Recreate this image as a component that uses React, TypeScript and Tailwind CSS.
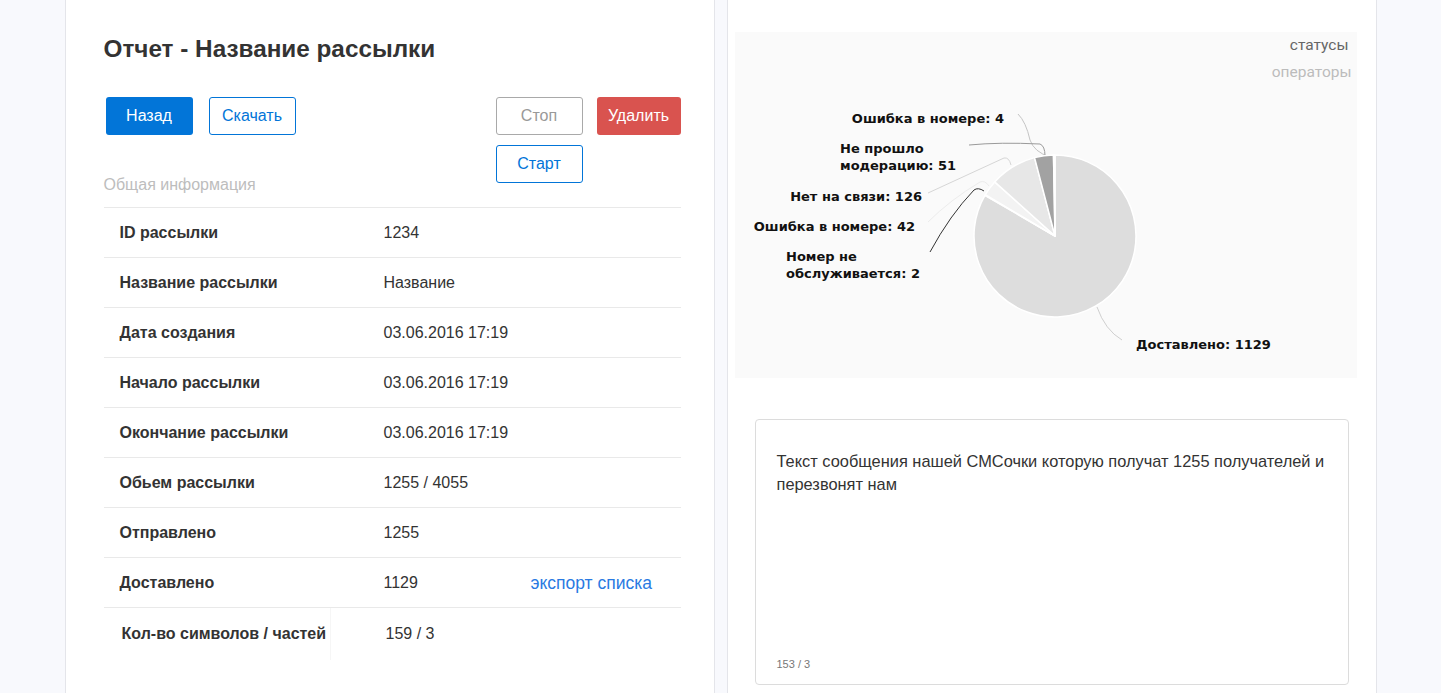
import React from 'react';

const rows = [
  { label: 'ID рассылки', value: '1234' },
  { label: 'Название рассылки', value: 'Название' },
  { label: 'Дата создания', value: '03.06.2016 17:19' },
  { label: 'Начало рассылки', value: '03.06.2016 17:19' },
  { label: 'Окончание рассылки', value: '03.06.2016 17:19' },
  { label: 'Обьем рассылки', value: '1255 / 4055' },
  { label: 'Отправлено', value: '1255' },
  { label: 'Доставлено', value: '1129', link: 'экспорт списка' },
];

const slices = [
  { value: 1129, color: '#dddddd' },
  { value: 2, color: '#4a4a4a' },
  { value: 42, color: '#f3f3f3' },
  { value: 126, color: '#e7e7e7' },
  { value: 51, color: '#a2a2a2' },
  { value: 4, color: '#c8c8c8' },
];

const CX = 1055;
const CY = 236;
const R = 81;

function point(angle: number) {
  const a = ((angle - 90) * Math.PI) / 180;
  return [CX + R * Math.cos(a), CY + R * Math.sin(a)];
}

function PieChart() {
  const total = slices.reduce((s, x) => s + x.value, 0);
  let start = 0;
  const paths = slices.map((s, i) => {
    const sweep = (s.value / total) * 360;
    const [x1, y1] = point(start);
    const [x2, y2] = point(start + sweep);
    const large = sweep > 180 ? 1 : 0;
    start += sweep;
    return (
      <path
        key={i}
        d={`M${CX},${CY} L${x1},${y1} A${R},${R} 0 ${large} 1 ${x2},${y2} Z`}
        fill={s.color}
        stroke="#ffffff"
        strokeWidth={1.5}
        strokeLinejoin="round"
      />
    );
  });

  const label = { fontFamily: '"DejaVu Sans", sans-serif', fontWeight: 700, fontSize: 13, fill: '#111' };

  return (
    <svg width={622} height={294} viewBox="735 84 622 294" className="block">
      {/* leader lines */}
      <path d="M1018,114 Q1026,122 1030,140 Q1034,152 1050,157" fill="none" stroke="#c4c4c4" strokeWidth={1} />
      <path d="M969,145 Q1000,142 1040,144 Q1045,146 1045,156" fill="none" stroke="#9a9a9a" strokeWidth={1} />
      <path d="M928,193 L1004,158 Q1009,157 1011,165" fill="none" stroke="#d6d6d6" strokeWidth={1} />
      <path d="M928,222 Q950,200 980,182 Q985,180 989,186" fill="none" stroke="#ececec" strokeWidth={1} />
      <path d="M930,252 Q950,215 974,190 Q978,187 984,191" fill="none" stroke="#333333" strokeWidth={1} />
      <path d="M1097,307 Q1105,330 1122,340" fill="none" stroke="#cfcfcf" strokeWidth={1} />
      {paths}
      <text x={1004} y={123} textAnchor="end" style={label}>Ошибка в номере: 4</text>
      <text x={840} y={153} style={label}>Не прошло</text>
      <text x={840} y={170} style={label}>модерацию: 51</text>
      <text x={922} y={201} textAnchor="end" style={label}>Нет на связи: 126</text>
      <text x={915} y={231} textAnchor="end" style={label}>Ошибка в номере: 42</text>
      <text x={786} y={261} style={label}>Номер не</text>
      <text x={786} y={278} style={label}>обслуживается: 2</text>
      <text x={1136} y={349} style={label}>Доставлено: 1129</text>
    </svg>
  );
}

export default function App() {
  return (
    <div className="min-h-screen bg-[#f8f9fd] font-['Liberation_Sans',Arial,sans-serif]">
      <div className="mx-auto flex w-[1312px] gap-[12px]">
        {/* Left panel: report */}
        <div className="h-[693px] w-[650px] border-x border-[#e4e5ea] bg-white pl-[38px] pr-[33px]">
          <h1 className="pt-[35px] text-[24.3px] font-bold leading-[28px] text-[#333]">Отчет - Название рассылки</h1>

          <div className="mt-[34px] flex h-[38px] items-start">
            <div className="flex gap-[16px] pl-[2px]">
              <button className="h-[38px] w-[87px] rounded-[3px] bg-[#0275d8] text-[16px] text-white">Назад</button>
              <button className="h-[38px] w-[87px] rounded-[3px] border border-[#0275d8] text-[16px] text-[#0275d8]">Скачать</button>
            </div>
            <div className="ml-auto flex gap-[14px]">
              <div className="flex flex-col gap-[10px]">
                <button className="h-[38px] w-[87px] rounded-[3px] border border-[#a9a9a9] text-[16px] text-[#999]">Стоп</button>
                <button className="h-[38px] w-[87px] rounded-[3px] border border-[#0275d8] text-[16px] text-[#0275d8]">Старт</button>
              </div>
              <button className="h-[38px] w-[84px] rounded-[3px] bg-[#d9534f] text-[16px] text-white">Удалить</button>
            </div>
          </div>

          <p className="mt-[41px] text-[16px] leading-[18px] text-[#bdbdbd]">Общая информация</p>

          <div className="mt-[13px] border-t border-[#e9e9e9]">
            {rows.map((r) => (
              <div key={r.label} className="flex h-[50px] items-center border-b border-[#e9e9e9] pt-px text-[16px] text-[#333]">
                <span className="w-[280px] pl-[16px] font-bold">{r.label}</span>
                <span className="w-[147px]">{r.value}</span>
                {r.link && <a className="text-[17.5px] text-[#2a7ae2]">{r.link}</a>}
              </div>
            ))}
            <div className="flex h-[52px] items-center text-[16px] text-[#333]">
              <span className="w-[226px] pl-[18px] font-bold">Кол-во символов / частей</span>
              <span className="h-full w-px bg-[#f6f6f6]" />
              <span className="pl-[55px]">159 / 3</span>
            </div>
          </div>
        </div>

        {/* Right panel: chart + message */}
        <div className="h-[693px] w-[650px] border-x border-[#e4e5ea] bg-white pl-[7px] pr-[19px] pt-[32px]">
          <div className="flex h-[346px] w-[622px] flex-col bg-[#fafafa]">
            <div className="flex h-[52px] flex-col items-end pr-[5px] font-['Roboto',sans-serif] text-[15.5px] leading-[27px]">
              <span className="pr-[3px] text-[#666]">статусы</span>
              <span className="text-[#bcbcbc]">операторы</span>
            </div>
            <PieChart />
          </div>

          <div className="ml-[20px] mt-[41px] flex h-[266px] w-[594px] flex-col rounded-[4px] border border-[#dcdcdc] px-[21px] pb-[12px] pt-[30px]">
            <p className="text-[16.4px] leading-[23px] text-[#333]">
              Текст сообщения нашей СМСочки которую получат 1255 получателей и перезвонят нам
            </p>
            <span className="mt-auto text-[11px] text-[#777]">153 / 3</span>
          </div>
        </div>
      </div>
    </div>
  );
}
